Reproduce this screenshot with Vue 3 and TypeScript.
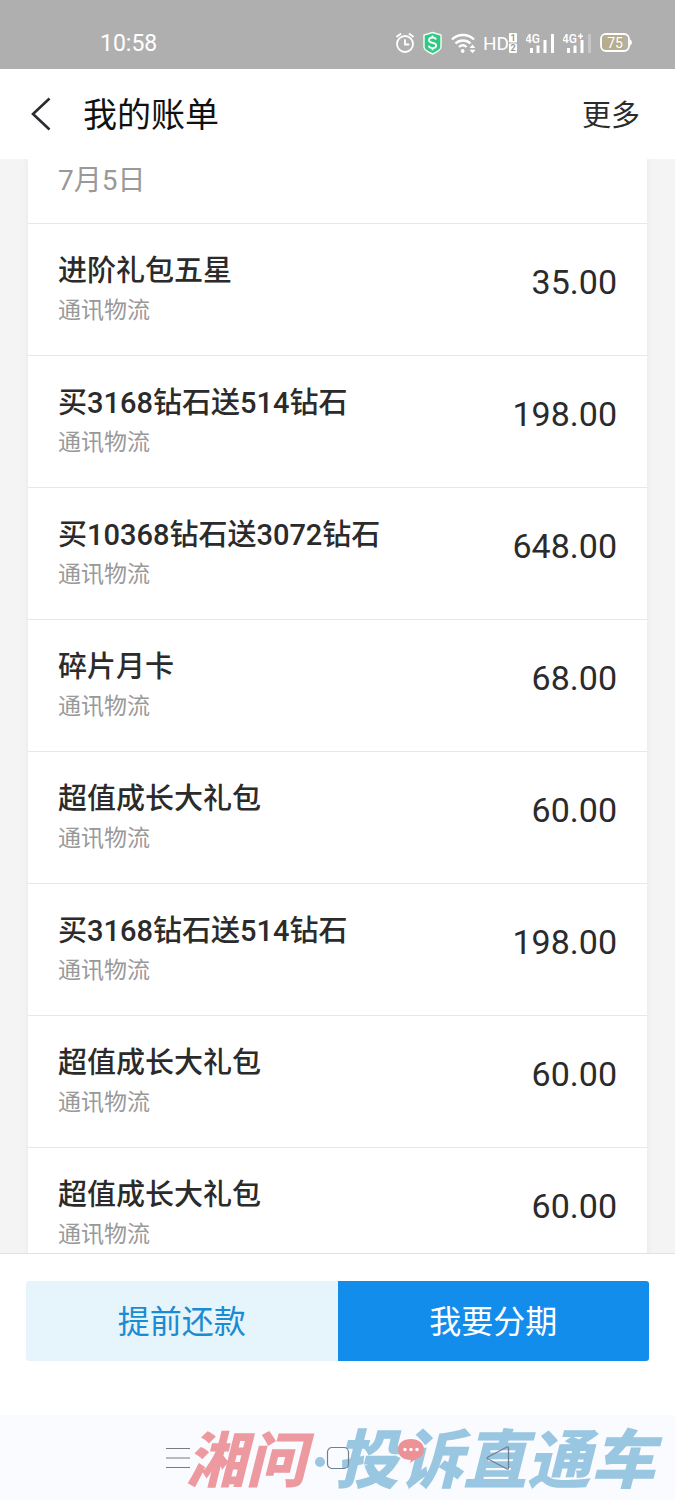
<script setup lang="ts">
interface Bill {
  id: number
  title: string
  category: string
  amount: number
}

const category = '通讯物流'
const entries: [string, number][] = [
  ['进阶礼包五星', 35],
  ['买3168钻石送514钻石', 198],
  ['买10368钻石送3072钻石', 648],
  ['碎片月卡', 68],
  ['超值成长大礼包', 60],
  ['买3168钻石送514钻石', 198],
  ['超值成长大礼包', 60],
  ['超值成长大礼包', 60],
]
const bills: Bill[] = entries.map(([title, amount], id) => ({ id, title, category, amount }))
</script>

<template>
  <div class="screen">
    <div class="status">
      <time class="clock">10:58</time>
      <div class="indicators">
        <svg width="18" height="24" viewBox="0 0 18 24" fill="none" stroke="#fff" stroke-width="1.8" stroke-linecap="round">
          <circle cx="9" cy="13" r="8" />
          <path d="M9 9v4.500h3.500M1 5.500l3.500-2.500M17 5.500l-3.500-2.500" />
        </svg>
        <svg width="19" height="24" viewBox="0 0 19 24">
          <path d="M9.500 1.500L18 4v12c0 3-4 5-8.500 7C5 21 1 19 1 16V4z" fill="#2fc983" stroke="#effff6" stroke-width="1.400" />
          <path d="M13 8.500c-.5-1.500-2-2-3.500-2-2 0-3.500 1-3.500 2.700 0 3.800 7.200 1.600 7.200 5.300 0 1.800-1.700 2.700-3.700 2.700-1.800 0-3.300-.7-3.800-2.400M9.500 4.500v2M9.500 17v2.200" fill="none" stroke="#fff" stroke-width="1.800" />
        </svg>
        <svg width="24" height="24" viewBox="0 0 24 24" fill="none" stroke="#fff" stroke-width="2.400">
          <path d="M1 8.500c6-6 16-6 22 0M4.500 12.500c4-4 11-4 15 0M8 16c2.300-2.200 5.200-2.200 7.500 0" />
          <circle cx="11.700" cy="20" r="1.900" fill="#fff" stroke="none" />
          <path d="M18.500 17l3-3.500 3 3.500zM18.500 18.800l3 3.500 3-3.500z" fill="#fff" stroke="none" />
        </svg>
        <svg class="hd-icon" width="33" height="24" viewBox="0 0 33 24">
          <text class="hd" x="-1" y="19">HD</text>
          <rect x="25" y="2" width="8" height="9.500" rx="1" fill="#fff" />
          <rect x="25" y="12.500" width="8" height="9.500" rx="1" fill="#fff" />
          <text class="sim" x="29" y="10">1</text>
          <text class="sim" x="29" y="20">2</text>
        </svg>
        <svg width="28" height="24" viewBox="0 0 28 24" fill="#fff">
          <text class="net" x="-1" y="12">4G</text>
          <path d="M4 17h3v5H4zM10.500 14.500h3V22h-3zM17.500 9h3v13h-3zM25 3h3v19h-3z" />
        </svg>
        <svg width="28" height="24" viewBox="0 0 28 24" fill="#fff">
          <text class="net" x="-1" y="12">4G</text>
          <path d="M15 4.500h5v1.500h-5zM16.800 2.500h1.500v5.500h-1.500z" />
          <path d="M4 17h3v5H4zM10.500 14.500h3V22h-3zM17.500 9h3v13h-3z" />
          <path d="M25 3h3v19h-3z" opacity=".3" />
        </svg>
        <svg width="32" height="24" viewBox="0 0 32 24">
          <rect x="1" y="3" width="28" height="17" rx="5" fill="#b3b0a2" stroke="#fff" stroke-width="1.800" />
          <path d="M6 4.200h17v14.600H6a4 4 0 0 1-4-4V8a4 4 0 0 1 4-4z" fill="#b6ad8f" />
          <path d="M30 8.500c2.500 1 2.500 5 0 6z" fill="#fff" />
          <text class="charge" x="15" y="17">75</text>
        </svg>
      </div>
    </div>

    <header class="header">
      <button class="back" type="button" aria-label="返回">
        <svg width="20" height="34" viewBox="0 0 20 34" fill="none" stroke="#2c2c30" stroke-width="2.600">
          <path d="M18.500 1.500L2 17l16.500 15.500" />
        </svg>
      </button>
      <h1 class="heading">我的账单</h1>
      <button class="more" type="button">更多</button>
    </header>

    <main class="content">
      <section class="card">
        <h2 class="date">7月5日</h2>
        <ul class="list">
          <li v-for="bill in bills" :key="bill.id" class="row">
            <div class="info">
              <div class="title">{{ bill.title }}</div>
              <div class="category">{{ bill.category }}</div>
            </div>
            <div class="amount">{{ bill.amount.toFixed(2) }}</div>
          </li>
        </ul>
      </section>
    </main>

    <footer class="actions">
      <button class="action light" type="button">提前还款</button>
      <button class="action primary" type="button">我要分期</button>
    </footer>

    <nav class="system">
      <div class="brand">
        <span class="brand-red">湘问</span>
        <span class="brand-dot"></span>
        <span class="brand-blue">投诉直通车</span>
        <svg class="bubble" width="26" height="24" viewBox="0 0 26 24">
          <path d="M13 0c7.500 0 13 4.500 13 10.500 0 5-3.500 8.500-8.500 10L12 24l1-3C5.500 21 0 17 0 10.500S5.500 0 13 0z" fill="#ec9297" />
          <g fill="#fff">
            <circle cx="7" cy="10.500" r="1.700" />
            <circle cx="13" cy="10.500" r="1.700" />
            <circle cx="19" cy="10.500" r="1.700" />
          </g>
        </svg>
      </div>
      <button class="key" type="button" aria-label="菜单">
        <svg width="24" height="24" viewBox="0 0 24 24" fill="none" stroke="#777b82" stroke-width="1.200">
          <path d="M0 2.500h24M0 12h24M0 21.500h24" />
        </svg>
      </button>
      <button class="key" type="button" aria-label="主屏幕">
        <svg width="24" height="24" viewBox="0 0 24 24" fill="none" stroke="#70808e" stroke-width="1.200">
          <rect x="1.500" y="1.500" width="21" height="21" rx="4.500" />
        </svg>
      </button>
      <button class="key" type="button" aria-label="后退">
        <svg width="24" height="24" viewBox="0 0 24 24" fill="none" stroke="#70808e" stroke-width="1.300" stroke-linejoin="round">
          <path d="M21 1q1.500-.5 1.500 1v20q0 1.500-1.500 1L2 13q-1.500-1 0-2z" />
        </svg>
      </button>
    </nav>
  </div>
</template>

<style>
body {
  margin: 0;
}
</style>

<style scoped>
.screen {
  display: flex;
  flex-direction: column;
  height: 100vh;
  overflow: hidden;
  background: #fff;
  color: #2b2b2b;
  font-family: Roboto, "Noto Sans CJK SC", sans-serif;
}
button {
  border: 0;
  padding: 0;
  background: none;
  color: inherit;
  font: inherit;
}
svg {
  display: block;
}
.status {
  display: flex;
  flex: none;
  align-items: center;
  justify-content: space-between;
  height: 52px;
  padding: 17px 43px 0 100px;
  background: #afafaf;
  color: #fff;
}
.clock {
  font-size: 23px;
}
.indicators {
  display: flex;
  gap: 9px;
}
.hd {
  fill: #fff;
  font-size: 19px;
}
.sim {
  fill: #999;
  font-size: 9px;
  font-weight: 700;
  text-anchor: middle;
}
.net {
  fill: #fff;
  font-size: 12px;
  font-weight: 500;
}
.charge {
  fill: #fff;
  font-size: 14px;
  text-anchor: middle;
}
.header {
  display: flex;
  flex: none;
  align-items: center;
  height: 90px;
  padding: 0 35px 0 31px;
}
.heading {
  flex: 1;
  margin: 0 0 0 32px;
  padding-bottom: 4px;
  color: #111;
  font-size: 34px;
  font-weight: 400;
}
.more {
  padding-bottom: 2px;
  font-size: 29px;
}
.content {
  flex: 1;
  min-height: 0;
  overflow: hidden;
  padding: 0 28px;
  background: #f4f4f4;
}
.card {
  background: #fff;
  box-shadow: 0 0 6px #e6e6e6;
}
.date {
  margin: 0;
  padding: 0 30px 20px;
  border-bottom: 1px solid #e8e8e8;
  color: #999;
  font-size: 28px;
  font-weight: 400;
  line-height: 44px;
}
.list {
  margin: 0;
  padding: 0;
  list-style: none;
}
.row {
  display: flex;
  justify-content: space-between;
  padding: 29px 30px 28px;
  border-bottom: 1px solid #e8e8e8;
}
.title {
  font-size: 29px;
  font-weight: 500;
  line-height: 36px;
}
.category {
  margin-top: 6px;
  color: #999;
  font-size: 23px;
  font-weight: 400;
  line-height: 32px;
}
.amount {
  font-size: 34px;
  line-height: 58px;
}
.actions {
  display: flex;
  flex: none;
  padding: 27px 26px 54px;
  border-top: 1px solid #e2e2e2;
}
.action {
  flex: 1;
  height: 80px;
  padding-bottom: 5px;
  font-size: 32px;
}
.light {
  border-radius: 3px 0 0 3px;
  background: #e6f4fb;
  color: #1b8bd2;
}
.primary {
  border-radius: 0 3px 3px 0;
  background: #128deb;
  color: #fff;
}
.system {
  position: relative;
  display: flex;
  flex: none;
  align-items: center;
  justify-content: center;
  gap: 136px;
  height: 85px;
  background: #fafbff;
}
.key {
  position: relative;
}
.brand {
  position: absolute;
  top: 12px;
  right: 20px;
  display: flex;
  align-items: center;
  font-size: 60px;
  font-style: italic;
  font-weight: 900;
  line-height: 70px;
}
.brand-red {
  color: #ec9a9f;
}
.brand-dot {
  width: 10px;
  height: 10px;
  margin: 0 10px 0 9px;
  border-radius: 50%;
  background: #99c6e1;
}
.brand-blue {
  color: #99c6e1;
  font-size: 64px;
}
.bubble {
  position: absolute;
  top: 12px;
  left: 212px;
}
</style>
